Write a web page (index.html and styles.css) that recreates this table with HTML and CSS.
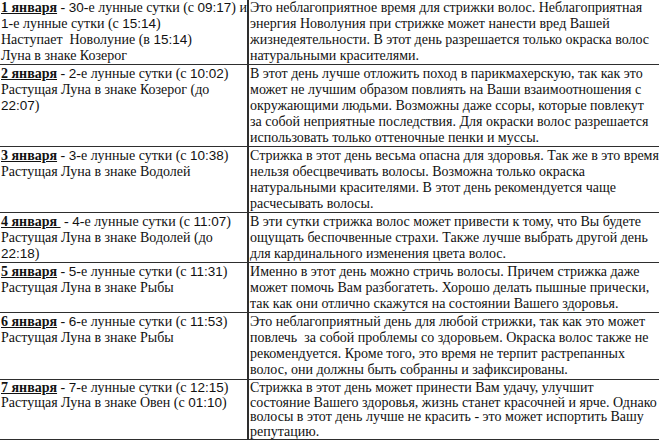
FILE: index.html
```html
<!DOCTYPE html>
<html lang="ru">
<head>
<meta charset="utf-8">
<title>Лунный календарь стрижек</title>
<link rel="stylesheet" href="styles.css">
</head>
<body>
<table class="cal">
  <tr class="r1">
    <td class="day"><span class="date">1 января</span> - <span class="d">30</span>-е лунные сутки (с <span class="d">09:17</span>) и<br><span class="d">1</span>-е лунные сутки (с <span class="d">15:14</span>)<br>Наступает&nbsp; Новолуние (в <span class="d">15:14</span>)<br>Луна в знаке Козерог</td>
    <td class="txt">Это неблагоприятное время для стрижки волос. Неблагоприятная<br>энергия Новолуния при стрижке может нанести вред Вашей<br>жизнедеятельности. В этот день разрешается только окраска волос<br>натуральными красителями.</td>
  </tr>
  <tr>
    <td class="day"><span class="date">2 января</span> - <span class="d">2</span>-е лунные сутки (с <span class="d">10:02</span>)<br>Растущая Луна в знаке Козерог (до<br><span class="d">22:07</span>)</td>
    <td class="txt">В этот день лучше отложить поход в парикмахерскую, так как это<br>может не лучшим образом повлиять на Ваши взаимоотношения с<br>окружающими людьми. Возможны даже ссоры, которые повлекут<br>за собой неприятные последствия. Для окраски волос разрешается<br>использовать только оттеночные пенки и муссы.</td>
  </tr>
  <tr>
    <td class="day"><span class="date">3 января</span> - <span class="d">3</span>-е лунные сутки (с <span class="d">10:38</span>)<br>Растущая Луна в знаке Водолей</td>
    <td class="txt">Стрижка в этот день весьма опасна для здоровья. Так же в это время<br>нельзя обесцвечивать волосы. Возможна только окраска<br>натуральными красителями. В этот день рекомендуется чаще<br>расчесывать волосы.</td>
  </tr>
  <tr>
    <td class="day"><span class="date">4 января&nbsp;</span> - <span class="d">4</span>-е лунные сутки (с <span class="d">11:07</span>)<br>Растущая Луна в знаке Водолей (до<br><span class="d">22:18</span>)</td>
    <td class="txt">В эти сутки стрижка волос может привести к тому, что Вы будете<br>ощущать беспочвенные страхи. Также лучше выбрать другой день<br>для кардинального изменения цвета волос.</td>
  </tr>
  <tr>
    <td class="day"><span class="date">5 января</span> - <span class="d">5</span>-е лунные сутки (с <span class="d">11:31</span>)<br>Растущая Луна в знаке Рыбы</td>
    <td class="txt">Именно в этот день можно стричь волосы. Причем стрижка даже<br>может помочь Вам разбогатеть. Хорошо делать пышные прически,<br>так как они отлично скажутся на состоянии Вашего здоровья.</td>
  </tr>
  <tr class="r6">
    <td class="day"><span class="date">6 января</span> - <span class="d">6</span>-е лунные сутки (с <span class="d">11:53</span>)<br>Растущая Луна в знаке Рыбы</td>
    <td class="txt">Это неблагоприятный день для любой стрижки, так как это может<br>повлечь&nbsp; за собой проблемы со здоровьем. Окраска волос также не<br>рекомендуется. Кроме того, это время не терпит растрепанных<br>волос, они должны быть собранны и зафиксированы.</td>
  </tr>
  <tr class="r7">
    <td class="day"><span class="date">7 января</span> - <span class="d">7</span>-е лунные сутки (с <span class="d">12:15</span>)<br>Растущая Луна в знаке Овен (с <span class="d">01:10</span>)</td>
    <td class="txt">Стрижка в этот день может принести Вам удачу, улучшит<br>состояние Вашего здоровья, жизнь станет красочней и ярче. Однако<br>волосы в этот день лучше не красить - это может испортить Вашу<br>репутацию.</td>
  </tr>
</table>
</body>
</html>
```

FILE: styles.css
```css
html, body {
  margin: 0;
  padding: 0;
  background: #ffffff;
}

body {
  width: 659px;
  height: 443px;
  overflow: hidden;
  font-family: "Liberation Serif", "Times New Roman", serif;
  font-size: 14px;
  line-height: 16px;
  color: #111111;
}

.cal {
  border-collapse: collapse;
  width: 661px;
  margin: -2px 0 0 -1px;
}

.cal td {
  vertical-align: top;
  white-space: nowrap;
  border: 1px solid #2e2e2e;
  padding: 1px 0 0 1px;
}

.cal .day {
  width: 241px;
  overflow: visible;
}

.cal .txt {
  border-left: 2px solid #2e2e2e;
}

.cal .r6 td {
  padding-bottom: 1px;
}

.cal .r7 td {
  line-height: 14.6px;
}

.date {
  font-weight: bold;
  text-decoration: underline;
}

.d {
  font-family: "Liberation Sans", Arial, sans-serif;
  font-size: 13.5px;
}
```
